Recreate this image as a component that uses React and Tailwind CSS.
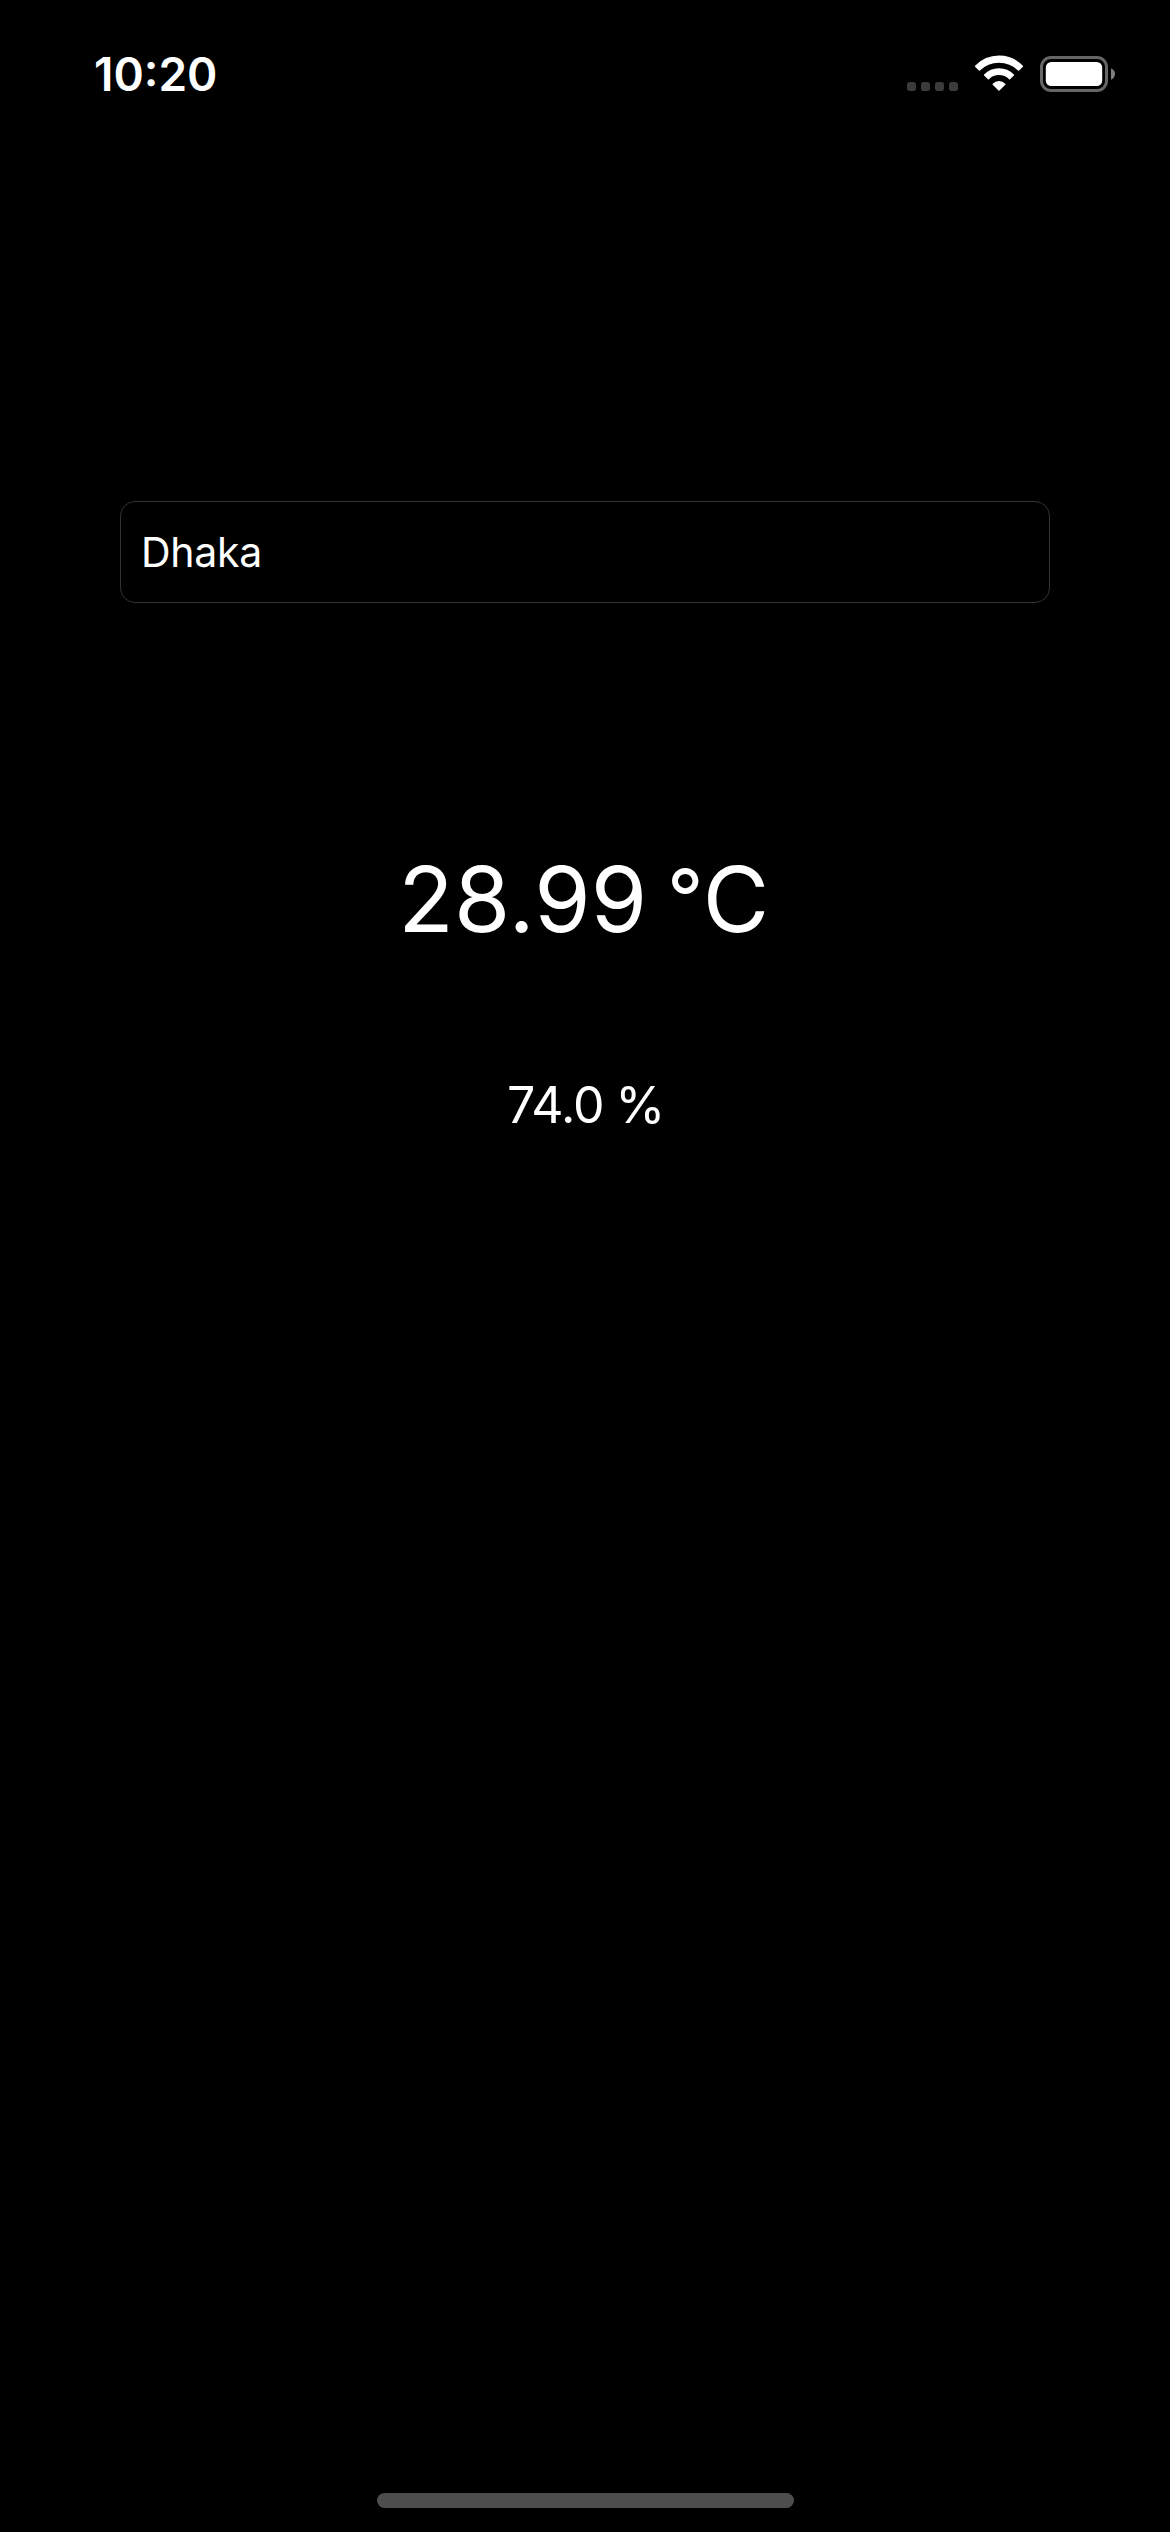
function StatusIcons() {
  return (
    <svg width="212" height="44" viewBox="905 50 212 44" fill="none">
      <g fill="#3b3b3b">
        <rect x="907" y="82" width="9" height="9" rx="2.8" />
        <rect x="921" y="82" width="9" height="9" rx="2.8" />
        <rect x="935" y="82" width="9" height="9" rx="2.8" />
        <rect x="949" y="82" width="9" height="9" rx="2.8" />
      </g>
      <g fill="#fff" stroke="#fff" strokeWidth="1.4" strokeLinejoin="round">
        <path d="M975.6 66.2A32.6 32.6 0 0 1 1022.4 66.2L1018.6 70.1A27.8 27.8 0 0 0 979.4 70.1Z" />
        <path d="M984.6 75.1A20 20 0 0 1 1013.4 75.1L1009.6 78.7A15 15 0 0 0 988.4 78.7Z" />
        <path d="M993.2 84.2A8.2 8.2 0 0 1 1004.8 84.2L999 90Z" />
      </g>
      <rect x="1041.5" y="57.5" width="65" height="33" rx="9.5" stroke="#666" strokeWidth="3" />
      <rect x="1045.8" y="62" width="56.4" height="24" rx="5.5" fill="#fff" />
      <path d="M1111 68.3C1113.4 69.2 1115 71.4 1115 74C1115 76.6 1113.4 78.8 1111 79.7Z" fill="#808080" />
    </svg>
  );
}

export default function App() {
  return (
    <div className="w-[1170px] h-[2532px] bg-black text-white font-['Inter',sans-serif] flex flex-col items-center overflow-hidden">
      <header className="w-full h-[141px] flex items-start justify-between pl-[94px] pr-[53px]">
        <div className="mt-[45px] text-[46px] leading-[58px] font-semibold">10:20</div>
        <div className="mt-[50px]">
          <StatusIcons />
        </div>
      </header>
      <div className="mt-[360px] w-[930px] h-[102px] rounded-[15px] border border-[#333] px-[20px] flex items-center text-[41px] leading-[50px] tracking-[-0.3px]">
        Dhaka
      </div>
      <div className="mt-[241px] mr-[2.4px] h-[110px] text-[91px] leading-[110px] whitespace-nowrap">
        <span className="tracking-[0.2px]">28.99</span>
        <span className="[word-spacing:-6px]"> </span>
        <span className="relative top-[-5.5px] text-[80px] leading-none">°</span>
        <span className="ml-[-0.7px]">C</span>
      </div>
      <div className="mt-[119px] ml-[2.4px] h-[64px] text-[50px] leading-[64px] whitespace-nowrap">
        <span className="tracking-[-1px] [word-spacing:-1.4px]">74.0 </span>
        <span className="text-[51px] leading-none">%</span>
      </div>
      <div className="mt-auto mb-[24px] w-[417px] h-[15px] rounded-full bg-[#4d4d4d]" />
    </div>
  );
}
